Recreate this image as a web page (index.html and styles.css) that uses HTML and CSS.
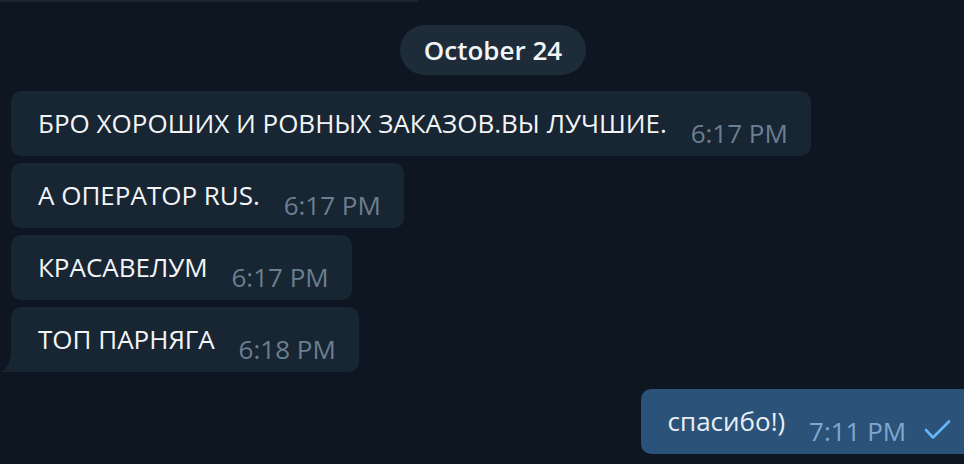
FILE: index.html
```html
<!DOCTYPE html>
<html lang="ru">

<head>
    <meta charset="UTF-8">
    <meta name="viewport" content="width=device-width, initial-scale=1.0">
    <title>Chat</title>
    <link rel="stylesheet" href="styles.css">
</head>

<body>
    <div class="top-line"></div>

    <div class="date-row">
        <span class="date-pill">October 24</span>
    </div>

    <div class="messages">
        <div class="msg in">
            <span class="text">БРО ХОРОШИХ И РОВНЫХ ЗАКАЗОВ.ВЫ ЛУЧШИЕ.</span>
            <span class="time">6:17 PM</span>
        </div>
        <div class="msg in">
            <span class="text">А ОПЕРАТОР RUS.</span>
            <span class="time">6:17 PM</span>
        </div>
        <div class="msg in">
            <span class="text">КРАСАВЕЛУМ</span>
            <span class="time">6:17 PM</span>
        </div>
        <div class="msg in last">
            <span class="text">ТОП ПАРНЯГА</span>
            <span class="time">6:18 PM</span>
        </div>

        <div class="msg out">
            <span class="text">спасибо!)</span>
            <span class="time">7:11 PM</span>
            <svg class="check" width="28" height="22" viewBox="0 0 28 22">
                <path d="M2 11 L9 18.5 L25 2.5" fill="none" stroke="#63b6f5" stroke-width="2.6"
                    stroke-linecap="round" stroke-linejoin="round" />
            </svg>
        </div>
    </div>
</body>

</html>
```

FILE: styles.css
```css
* {
    margin: 0;
    padding: 0;
    box-sizing: border-box;
}

body {
    background: #0e1621;
    font-family: "Open Sans", "Noto Sans", sans-serif;
    width: 964px;
    height: 464px;
    overflow: hidden;
}

.top-line {
    width: 418px;
    height: 2px;
    background: #1b2634;
}

.date-row {
    display: flex;
    justify-content: center;
    padding-left: 22px;
    margin-top: 23px;
}

.date-pill {
    display: block;
    height: 50px;
    width: 186px;
    line-height: 50px;
    text-align: center;
    border-radius: 25px;
    background: #1e2c3a;
    color: #f2f5f8;
    font-size: 26px;
    font-weight: 600;
}

.messages {
    display: flex;
    flex-direction: column;
    align-items: flex-start;
    gap: 7px;
    margin-top: 16px;
    padding-left: 11px;
}

.msg {
    position: relative;
    height: 65px;
    padding: 16px 23px 0 27px;
    border-radius: 10px;
    background: #182533;
    font-size: 26px;
    line-height: 33px;
    white-space: nowrap;
}

.msg .text {
    color: #f3f5f7;
}

.msg .time {
    display: inline-block;
    margin-left: 17px;
    vertical-align: -10px;
    line-height: 33px;
    color: #6c7f90;
}

.msg.last {
    border-bottom-left-radius: 0;
}

.msg.last::before {
    content: "";
    position: absolute;
    left: -11px;
    bottom: 0;
    width: 11px;
    height: 22px;
    background: radial-gradient(ellipse 11px 22px at 0 0, transparent 97%, #182533 100%);
}

.msg.out {
    align-self: flex-end;
    margin-top: 10px;
    padding-right: 12px;
    border-radius: 10px 0 0 10px;
    background: #2b5278;
}

.msg.out .text {
    color: #e8eef4;
}

.msg.out .time {
    color: #7fa8cf;
}

.check {
    display: inline-block;
    margin-left: 11px;
    vertical-align: -10px;
}
```
